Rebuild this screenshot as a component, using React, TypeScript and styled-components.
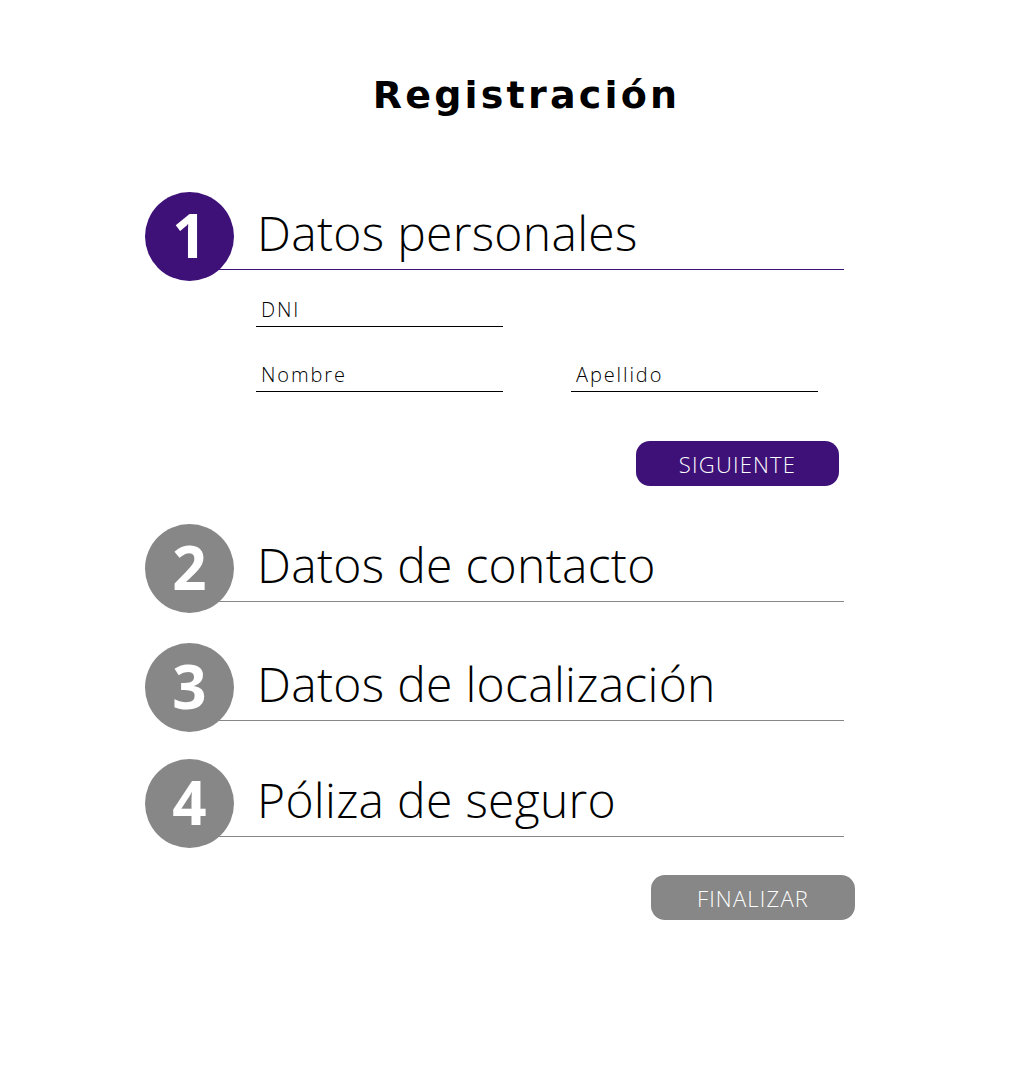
import React from "react";
import styled, { createGlobalStyle } from "styled-components";

const Global = createGlobalStyle`
  html, body { margin: 0; padding: 0; background: #ffffff; }
  body { font-family: "Open Sans", "Noto Sans", sans-serif; color: #000; }
`;

const PURPLE = "#3d1178";
const GREY = "#878787";

const Page = styled.main`
  width: 1020px;
  min-height: 1070px;
  box-sizing: border-box;
  padding: 68px 0 0 145px;
`;

const Title = styled.h1`
  margin: 0 0 70px 0;
  width: 763px;
  text-align: center;
  font-family: "DejaVu Sans", "Open Sans", sans-serif;
  font-weight: 700;
  font-size: 38px;
  letter-spacing: 3.2px;
  line-height: 54px;
  color: #000;
`;

const StepList = styled.section`
  display: flex;
  flex-direction: column;
`;

const Step = styled.div<{ $gap: number }>`
  display: flex;
  flex-direction: column;
  margin-bottom: ${(p) => p.$gap}px;
`;

const StepHeader = styled.div`
  display: flex;
  align-items: flex-start;
`;

const Circle = styled.div<{ $active?: boolean }>`
  position: relative;
  z-index: 1;
  flex: none;
  width: 89px;
  height: 89px;
  border-radius: 50%;
  background: ${(p) => (p.$active ? PURPLE : GREY)};
  color: #fff;
  display: flex;
  align-items: center;
  justify-content: center;
  font-family: "Open Sans", sans-serif;
  font-weight: 700;
  font-size: 60px;
  line-height: 1;
  padding-bottom: 3px;
  box-sizing: border-box;
`;

const StepTitle = styled.h2<{ $active?: boolean }>`
  margin: 0 0 0 -34px;
  padding: 0 0 0 57px;
  width: 644px;
  box-sizing: border-box;
  height: 78px;
  border-bottom: 1px solid ${(p) => (p.$active ? PURPLE : GREY)};
  font-family: "Open Sans", sans-serif;
  font-weight: 300;
  font-size: 48px;
  letter-spacing: 0.3px;
  line-height: 82px;
  color: #000;
  white-space: nowrap;
`;

const Form = styled.div`
  padding: 6px 0 0 111px;
  display: flex;
  flex-direction: column;
  gap: 25px;
`;

const FieldRow = styled.div`
  display: flex;
  gap: 68px;
`;

const Field = styled.label`
  width: 247px;
  height: 40px;
  box-sizing: border-box;
  border-bottom: 1px solid #000;
  display: flex;
  align-items: flex-end;
  padding: 0 0 4px 5px;
  font-family: "Open Sans", sans-serif;
  font-weight: 300;
  font-size: 20px;
  letter-spacing: 1.9px;
  line-height: 24px;
  color: #000;
`;

const Actions = styled.div<{ $right: number; $top?: number }>`
  display: flex;
  justify-content: flex-end;
  width: ${(p) => p.$right}px;
  margin-top: ${(p) => p.$top ?? 0}px;
`;

const Button = styled.button<{ $active?: boolean }>`
  width: ${(p) => (p.$active ? 203 : 204)}px;
  height: 45px;
  border: none;
  border-radius: 14px;
  background: ${(p) => (p.$active ? PURPLE : GREY)};
  color: #fff;
  font-family: "Open Sans", sans-serif;
  font-weight: 300;
  font-size: 22px;
  letter-spacing: 1.2px;
  padding: 0;
  cursor: pointer;
`;

const steps = [
  { n: 1, label: "Datos personales", gap: 38 },
  { n: 2, label: "Datos de contacto", gap: 30 },
  { n: 3, label: "Datos de localización", gap: 27 },
  { n: 4, label: "Póliza de seguro", gap: 27 },
];

export default function App() {
  return (
    <>
      <Global />
      <Page>
        <Title>Registración</Title>
        <StepList>
          {steps.map((s) => (
            <Step key={s.n} $gap={s.gap}>
              <StepHeader>
                <Circle $active={s.n === 1}>{s.n}</Circle>
                <StepTitle $active={s.n === 1}>{s.label}</StepTitle>
              </StepHeader>
              {s.n === 1 && (
                <>
                  <Form>
                    <FieldRow>
                      <Field>DNI</Field>
                    </FieldRow>
                    <FieldRow>
                      <Field>Nombre</Field>
                      <Field>Apellido</Field>
                    </FieldRow>
                  </Form>
                  <Actions $right={694} $top={49}>
                    <Button $active>SIGUIENTE</Button>
                  </Actions>
                </>
              )}
            </Step>
          ))}
        </StepList>
        <Actions $right={710}>
          <Button>FINALIZAR</Button>
        </Actions>
      </Page>
    </>
  );
}
